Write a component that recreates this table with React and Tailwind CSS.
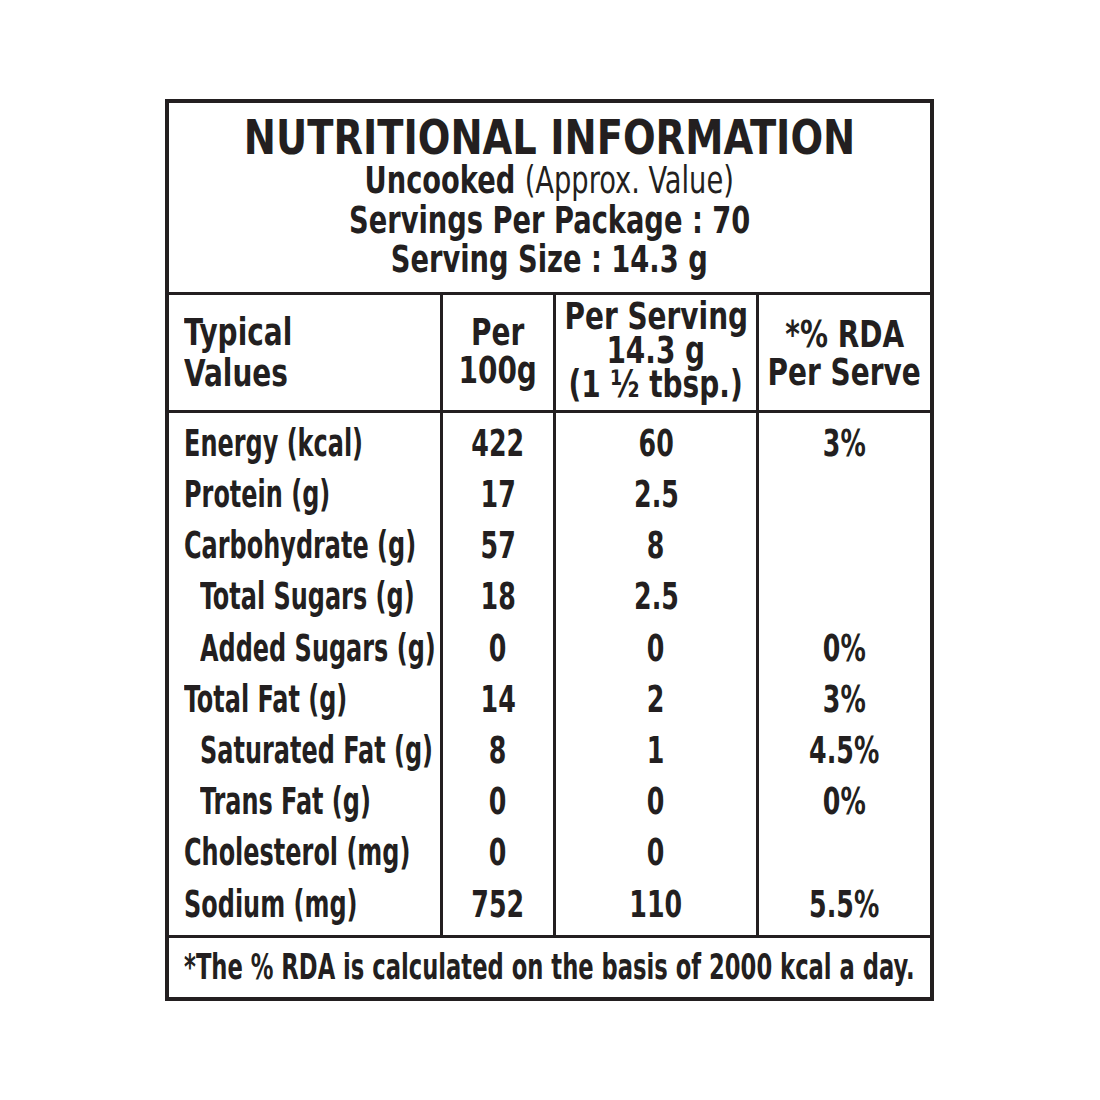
import React from "react";

const rows = [
  { label: "Energy (kcal)", per100: "422", serving: "60", rda: "3%" },
  { label: "Protein (g)", per100: "17", serving: "2.5", rda: "" },
  { label: "Carbohydrate (g)", per100: "57", serving: "8", rda: "" },
  { label: "Total Sugars (g)", per100: "18", serving: "2.5", rda: "", sub: true },
  { label: "Added Sugars (g)", per100: "0", serving: "0", rda: "0%", sub: true },
  { label: "Total Fat (g)", per100: "14", serving: "2", rda: "3%" },
  { label: "Saturated Fat (g)", per100: "8", serving: "1", rda: "4.5%", sub: true },
  { label: "Trans Fat (g)", per100: "0", serving: "0", rda: "0%", sub: true },
  { label: "Cholesterol (mg)", per100: "0", serving: "0", rda: "" },
  { label: "Sodium (mg)", per100: "752", serving: "110", rda: "5.5%" },
];

const font = {
  fontFamily: '"DejaVu Sans Condensed", "Liberation Sans Narrow", "Liberation Sans", sans-serif',
};

// squeeze widths per text group, to get the narrow label face
const widths = {
  body: "scale-x-[0.72]",
  num: "scale-x-[0.76]",
  head: "scale-x-[0.84]",
  sub: "scale-x-[0.82]",
};

const Sq = ({ children, left, w = "body" }) => (
  <span
    className={`inline-block whitespace-nowrap ${widths[w]} ${
      left ? "origin-left" : "origin-center"
    }`}
  >
    {children}
  </span>
);

export default function App() {
  return (
    <main
      className="w-[1100px] h-[1100px] bg-white text-[#231f20] pt-[99px] pl-[165px]"
      style={font}
    >
      <div className="w-[769px] border-[4px] border-[#231f20] flex flex-col">
        {/* Title block */}
        <section className="h-[192px] border-b-[3px] border-[#231f20] flex flex-col items-center pt-[10px] font-bold">
          <h1 className="text-[48px] leading-[48px] whitespace-nowrap scale-x-[0.89]">
            NUTRITIONAL INFORMATION
          </h1>
          <p className="text-[37px] leading-[39.5px]">
            <Sq w="sub">
              Uncooked <span className="font-normal">(Approx. Value)</span>
            </Sq>
          </p>
          <p className="text-[37px] leading-[39.5px]">
            <Sq w="sub">Servings Per Package : 70</Sq>
          </p>
          <p className="text-[37px] leading-[39.5px]">
            <Sq w="sub">Serving Size : 14.3 g</Sq>
          </p>
        </section>

        {/* Column headings */}
        <section className="h-[118px] border-b-[3px] border-[#231f20] grid grid-cols-[274px_113px_203px_minmax(0,1fr)] text-[37px] font-bold">
          <div className="border-r-[3px] border-[#231f20] pl-[15px] pt-[17px] leading-[41px]">
            <div><Sq left w="head">Typical</Sq></div>
            <div><Sq left w="head">Values</Sq></div>
          </div>
          <div className="border-r-[3px] border-[#231f20] flex flex-col items-center pt-[19px] leading-[38px]">
            <Sq w="head">Per</Sq>
            <Sq w="head">100g</Sq>
          </div>
          <div className="border-r-[3px] border-[#231f20] flex flex-col items-center pt-[5px] leading-[34px]">
            <Sq w="head">Per Serving</Sq>
            <Sq w="head">14.3 g</Sq>
            <Sq w="head">(1 ½ tbsp.)</Sq>
          </div>
          <div className="min-w-0 flex flex-col items-center pt-[21px] leading-[38px]">
            <Sq w="head">*% RDA</Sq>
            <Sq w="head">Per Serve</Sq>
          </div>
        </section>

        {/* Values */}
        <section className="border-b-[3px] border-[#231f20] grid grid-cols-[274px_113px_203px_minmax(0,1fr)] text-[37px] font-bold">
          <div className="border-r-[3px] border-[#231f20] py-[5px]">
            {rows.map((r) => (
              <div
                key={r.label}
                className={`h-[51.2px] flex items-center ${r.sub ? "pl-[31px]" : "pl-[15px]"}`}
              >
                <Sq left>{r.label}</Sq>
              </div>
            ))}
          </div>
          <div className="border-r-[3px] border-[#231f20] py-[5px]">
            {rows.map((r) => (
              <div key={r.label} className="h-[51.2px] flex items-center justify-center">
                <Sq w="num">{r.per100}</Sq>
              </div>
            ))}
          </div>
          <div className="border-r-[3px] border-[#231f20] py-[5px]">
            {rows.map((r) => (
              <div key={r.label} className="h-[51.2px] flex items-center justify-center">
                <Sq w="num">{r.serving}</Sq>
              </div>
            ))}
          </div>
          <div className="min-w-0 py-[5px]">
            {rows.map((r) => (
              <div key={r.label} className="h-[51.2px] flex items-center justify-center">
                <Sq w="num">{r.rda}</Sq>
              </div>
            ))}
          </div>
        </section>

        {/* Footnote */}
        <section className="h-[59px] flex items-center justify-center text-[35px] font-bold">
          <Sq>*The % RDA is calculated on the basis of 2000 kcal a day.</Sq>
        </section>
      </div>
    </main>
  );
}
